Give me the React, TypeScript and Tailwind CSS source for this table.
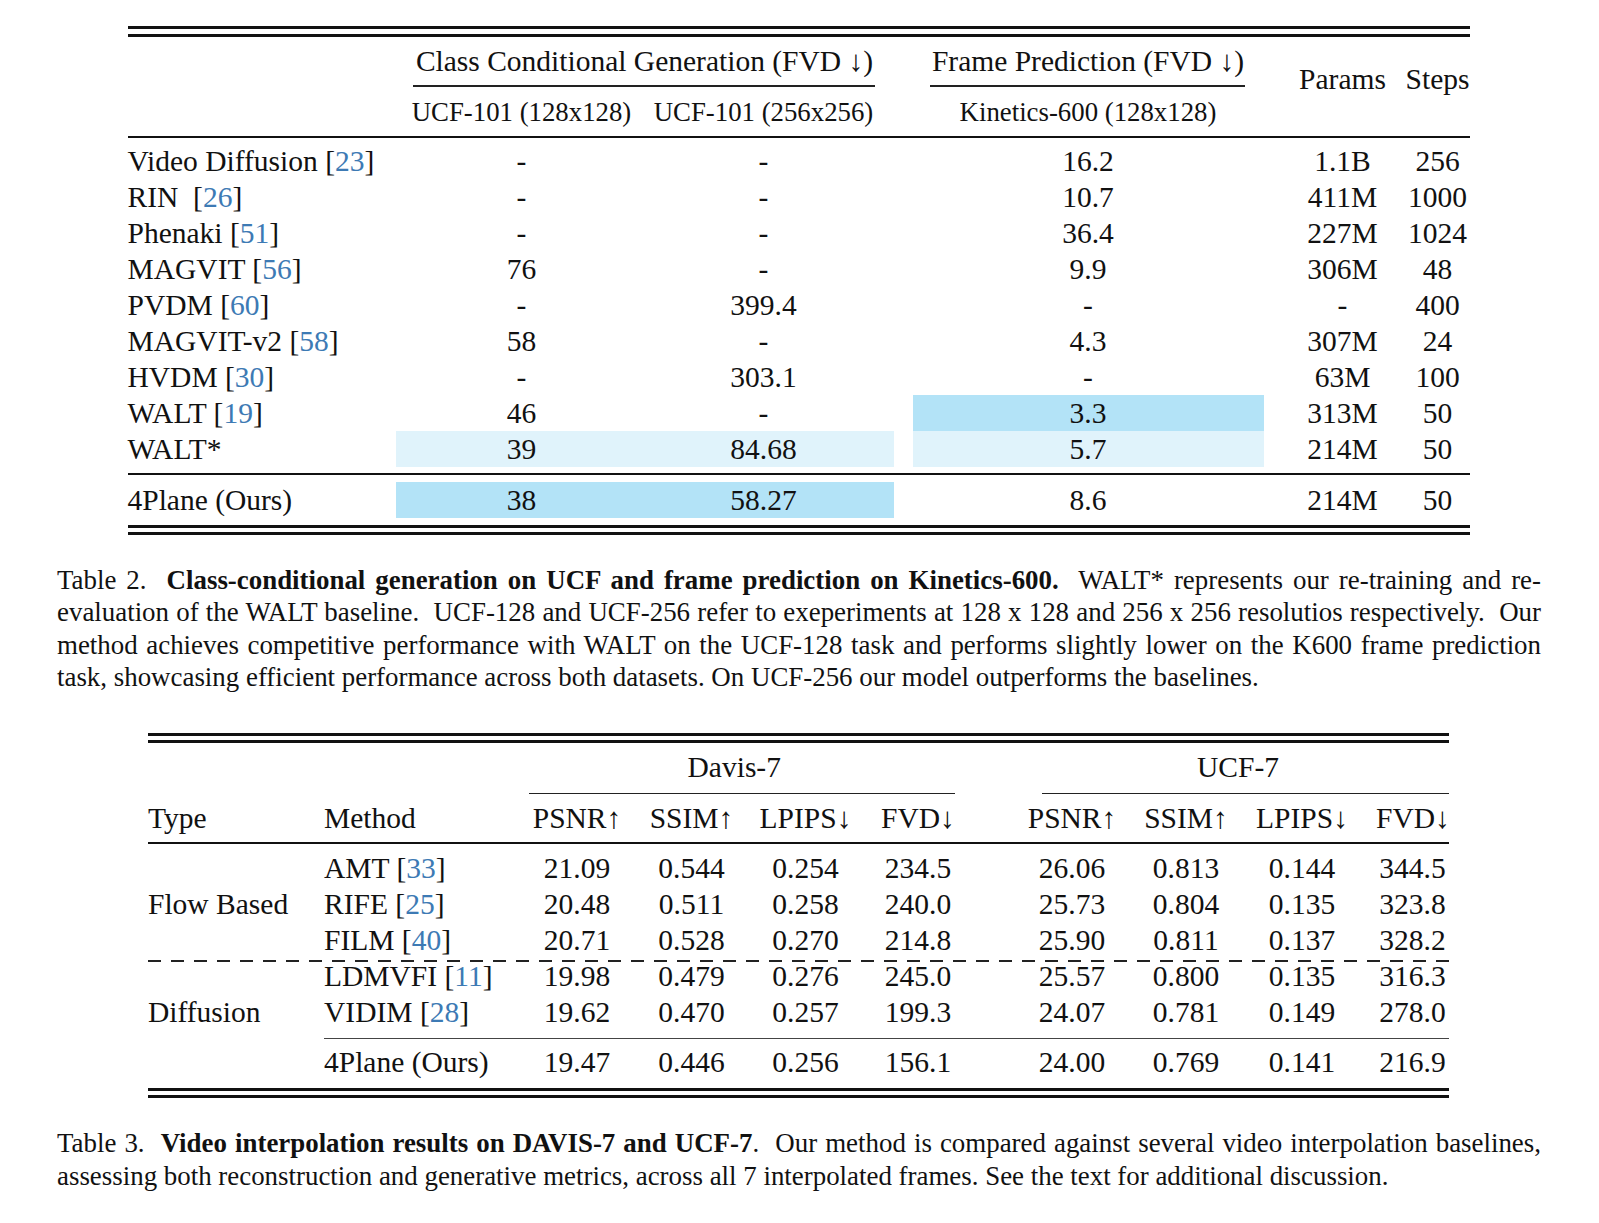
import type { ReactNode } from "react";

const serif = "font-['Liberation_Serif','Times_New_Roman',serif]";

const HL = {
  none: "",
  dark: "bg-[#b3e3f7]",
  light: "bg-[#e0f3fb]",
} as const;

type Hl = keyof typeof HL;

function Cite({ n }: { n: number }) {
  return (
    <>
      [<span className="text-[#3d7ab4]">{n}</span>]
    </>
  );
}

function ThickRule() {
  return <div className="h-[3px] bg-[#111]" />;
}

/* ---------- Table 2 ---------- */

const T1_COLS = "grid grid-cols-[268px_248px_250px_19px_351px_142px_64px]";

interface GenRow {
  name: ReactNode;
  ucf128: string;
  ucf256: string;
  k600: string;
  params: string;
  steps: string;
  hl?: [Hl, Hl, Hl];
}

const genRows: GenRow[] = [
  { name: <>Video Diffusion <Cite n={23} /></>, ucf128: "-", ucf256: "-", k600: "16.2", params: "1.1B", steps: "256" },
  { name: <>RIN&nbsp; <Cite n={26} /></>, ucf128: "-", ucf256: "-", k600: "10.7", params: "411M", steps: "1000" },
  { name: <>Phenaki <Cite n={51} /></>, ucf128: "-", ucf256: "-", k600: "36.4", params: "227M", steps: "1024" },
  { name: <>MAGVIT <Cite n={56} /></>, ucf128: "76", ucf256: "-", k600: "9.9", params: "306M", steps: "48" },
  { name: <>PVDM <Cite n={60} /></>, ucf128: "-", ucf256: "399.4", k600: "-", params: "-", steps: "400" },
  { name: <>MAGVIT-v2 <Cite n={58} /></>, ucf128: "58", ucf256: "-", k600: "4.3", params: "307M", steps: "24" },
  { name: <>HVDM <Cite n={30} /></>, ucf128: "-", ucf256: "303.1", k600: "-", params: "63M", steps: "100" },
  { name: <>WALT <Cite n={19} /></>, ucf128: "46", ucf256: "-", k600: "3.3", params: "313M", steps: "50", hl: ["none", "none", "dark"] },
  { name: "WALT*", ucf128: "39", ucf256: "84.68", k600: "5.7", params: "214M", steps: "50", hl: ["light", "light", "light"] },
];

const oursGen: GenRow = {
  name: "4Plane (Ours)",
  ucf128: "38",
  ucf256: "58.27",
  k600: "8.6",
  params: "214M",
  steps: "50",
  hl: ["dark", "dark", "none"],
};

function GenTableRow({ row }: { row: GenRow }) {
  const [a, b, c] = row.hl ?? ["none", "none", "none"];
  return (
    <div className={`${T1_COLS} h-[36px] leading-[36px]`}>
      <div className="whitespace-nowrap">{row.name}</div>
      <div className={`text-center pl-[4px] ${HL[a]}`}>{row.ucf128}</div>
      <div className={`text-center pr-[10px] ${HL[b]}`}>{row.ucf256}</div>
      <div />
      <div className={`text-center ${HL[c]}`}>{row.k600}</div>
      <div className="text-center pl-[26px] pr-[10px]">{row.params}</div>
      <div className="text-center">{row.steps}</div>
    </div>
  );
}

function GenerationTable() {
  return (
    <div className="ml-[127.5px] w-[1342px] text-[29.5px]">
      <ThickRule />
      <div className="mt-[5px]">
        <ThickRule />
      </div>

      {/* header */}
      <div className="flex pt-[6px]">
        <div className="w-[268px]" />
        <div className="w-[498px]">
          <div className="h-[36px] leading-[36px] text-center whitespace-nowrap">
            Class Conditional Generation (FVD ↓)
          </div>
          <div className="ml-[17px] mr-[19px] mt-[6px] h-[1.5px] bg-[#222]" />
          <div className="mt-[7.5px] grid grid-cols-[248px_250px] h-[36px] leading-[36px] text-[26.8px]">
            <div className="text-center pl-[4px] whitespace-nowrap">UCF-101 (128x128)</div>
            <div className="text-center pr-[10px] whitespace-nowrap">UCF-101 (256x256)</div>
          </div>
        </div>
        <div className="w-[19px]" />
        <div className="w-[351px]">
          <div className="h-[36px] leading-[36px] text-center whitespace-nowrap">
            Frame Prediction (FVD ↓)
          </div>
          <div className="ml-[17px] mr-[19px] mt-[6px] h-[1.5px] bg-[#222]" />
          <div className="mt-[7.5px] h-[36px] leading-[36px] text-center whitespace-nowrap text-[26.8px]">
            Kinetics-600 (128x128)
          </div>
        </div>
        <div className="w-[142px] pl-[26px] pr-[10px] pt-[17.6px]">
          <div className="h-[36px] leading-[36px] text-center">Params</div>
        </div>
        <div className="w-[64px] pt-[17.6px]">
          <div className="h-[36px] leading-[36px] text-center">Steps</div>
        </div>
      </div>

      <div className="mt-[6px] h-[2px] bg-[#111]" />

      <div className="mt-[5px]">
        {genRows.map((r, i) => (
          <GenTableRow key={i} row={r} />
        ))}
      </div>

      <div className="mt-[6px] h-[2px] bg-[#111]" />
      <div className="mt-[7px]">
        <GenTableRow row={oursGen} />
      </div>

      <div className="mt-[7px]">
        <ThickRule />
      </div>
      <div className="mt-[4px]">
        <ThickRule />
      </div>
    </div>
  );
}

/* ---------- Table 3 ---------- */

const T3_COLS =
  "grid grid-cols-[176px_205px_96px_133px_95px_130px_17px_144px_84px_148px_73px]";

interface InterpRow {
  type?: string;
  method: ReactNode;
  davis: string[];
  ucf: string[];
}

const flowRows: InterpRow[] = [
  { method: <>AMT <Cite n={33} /></>, davis: ["21.09", "0.544", "0.254", "234.5"], ucf: ["26.06", "0.813", "0.144", "344.5"] },
  { type: "Flow Based", method: <>RIFE <Cite n={25} /></>, davis: ["20.48", "0.511", "0.258", "240.0"], ucf: ["25.73", "0.804", "0.135", "323.8"] },
  { method: <>FILM <Cite n={40} /></>, davis: ["20.71", "0.528", "0.270", "214.8"], ucf: ["25.90", "0.811", "0.137", "328.2"] },
];

const diffRows: InterpRow[] = [
  { method: <>LDMVFI <Cite n={11} /></>, davis: ["19.98", "0.479", "0.276", "245.0"], ucf: ["25.57", "0.800", "0.135", "316.3"] },
  { type: "Diffusion", method: <>VIDIM <Cite n={28} /></>, davis: ["19.62", "0.470", "0.257", "199.3"], ucf: ["24.07", "0.781", "0.149", "278.0"] },
];

const oursInterp: InterpRow = {
  method: "4Plane (Ours)",
  davis: ["19.47", "0.446", "0.256", "156.1"],
  ucf: ["24.00", "0.769", "0.141", "216.9"],
};

function InterpTableRow({ row }: { row: InterpRow }) {
  return (
    <div className={`${T3_COLS} h-[36px] leading-[36px]`}>
      <div className="whitespace-nowrap">{row.type ?? ""}</div>
      <div className="whitespace-nowrap">{row.method}</div>
      {row.davis.map((v, i) => (
        <div key={`d${i}`} className="text-center">
          {v}
        </div>
      ))}
      <div />
      {row.ucf.map((v, i) => (
        <div key={`u${i}`} className="text-center">
          {v}
        </div>
      ))}
    </div>
  );
}

const metrics = ["PSNR↑", "SSIM↑", "LPIPS↓", "FVD↓"];

function InterpolationTable() {
  return (
    <div className="ml-[148px] w-[1301px] text-[29.5px]">
      <ThickRule />
      <div className="mt-[4.5px]">
        <ThickRule />
      </div>

      {/* dataset groups */}
      <div className="flex pt-[6px]">
        <div className="w-[381px]" />
        <div className="w-[425.5px]">
          <div className="h-[36px] leading-[36px] text-center pr-[15px]">Davis-7</div>
          <div className="mt-[7.5px] h-[1.5px] bg-[#222]" />
        </div>
        <div className="w-[87.5px]" />
        <div className="w-[407px]">
          <div className="h-[36px] leading-[36px] text-center pr-[15px]">UCF-7</div>
          <div className="mt-[7.5px] h-[1.5px] bg-[#222]" />
        </div>
      </div>

      <div className={`${T3_COLS} mt-[6px] h-[36px] leading-[36px]`}>
        <div>Type</div>
        <div>Method</div>
        {metrics.map((m) => (
          <div key={`dh${m}`} className="text-center whitespace-nowrap">
            {m}
          </div>
        ))}
        <div />
        {metrics.map((m) => (
          <div key={`uh${m}`} className="text-center whitespace-nowrap">
            {m}
          </div>
        ))}
      </div>

      <div className="mt-[6px] h-[2px] bg-[#111]" />

      <div className="mt-[6px]">
        {flowRows.map((r, i) => (
          <InterpTableRow key={i} row={r} />
        ))}
        {/* dashed separator overlaps the next row, as \hdashline does */}
        <div className="h-0">
          <div className="h-[1.5px] translate-y-[2px] bg-[repeating-linear-gradient(to_right,#222_0px,#222_13px,transparent_13px,transparent_23px)]" />
        </div>
        {diffRows.map((r, i) => (
          <InterpTableRow key={i} row={r} />
        ))}
      </div>

      <div className="ml-[176px] mt-[7.5px] h-[1px] bg-[#444]" />
      <div className="mt-[5px]">
        <InterpTableRow row={oursInterp} />
      </div>

      <div className="mt-[8px]">
        <ThickRule />
      </div>
      <div className="mt-[4px]">
        <ThickRule />
      </div>
    </div>
  );
}

/* ---------- captions ---------- */

function Line({ children, last = false }: { children: ReactNode; last?: boolean }) {
  return (
    <div
      className={
        last
          ? "whitespace-nowrap text-left"
          : "whitespace-nowrap text-justify [text-align-last:justify]"
      }
    >
      {children}
    </div>
  );
}

function Caption({ children, className = "" }: { children: ReactNode; className?: string }) {
  return (
    <div className={`ml-[57px] w-[1484px] text-[26.9px] leading-[32.6px] ${className}`}>
      {children}
    </div>
  );
}

export default function App() {
  return (
    <div className={`w-[1599px] h-[1223px] overflow-hidden bg-white pt-[26px] text-[#111] ${serif}`}>
      <GenerationTable />

      <Caption className="mt-[28.7px]">
        <Line>
          Table 2.&nbsp; <b>Class-conditional generation on UCF and frame prediction on Kinetics-600.</b>&nbsp; WALT* represents our re-training and re-
        </Line>
        <Line>
          evaluation of the WALT baseline.&nbsp; UCF-128 and UCF-256 refer to exeperiments at 128 x 128 and 256 x 256 resolutios respectively.&nbsp; Our
        </Line>
        <Line>
          method achieves competitive performance with WALT on the UCF-128 task and performs slightly lower on the K600 frame prediction
        </Line>
        <Line last>
          task, showcasing efficient performance across both datasets. On UCF-256 our model outperforms the baselines.
        </Line>
      </Caption>

      <div className="mt-[38.5px]">
        <InterpolationTable />
      </div>

      <Caption className="mt-[29.5px]">
        <Line>
          Table 3.&nbsp; <b>Video interpolation results on DAVIS-7 and UCF-7</b>.&nbsp; Our method is compared against several video interpolation baselines,
        </Line>
        <Line last>
          assessing both reconstruction and generative metrics, across all 7 interpolated frames. See the text for additional discussion.
        </Line>
      </Caption>
    </div>
  );
}
